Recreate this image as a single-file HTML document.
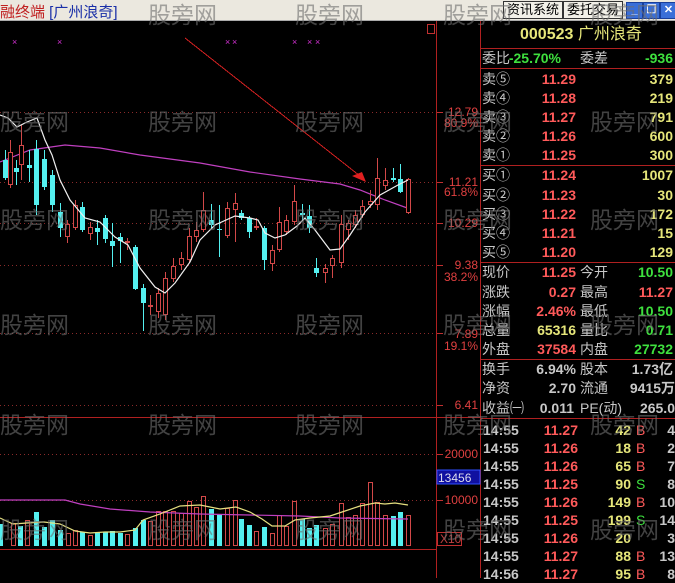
<!DOCTYPE html>
<html><head><meta charset="utf-8">
<style>
html,body{margin:0;padding:0;background:#000;width:675px;height:578px;overflow:hidden;font-family:"Liberation Sans","Noto Sans CJK SC",sans-serif}
#title{position:absolute;left:0;top:0;width:675px;height:20px;background:#ebe8df;border-bottom:1px solid #aaa}
.t{position:absolute;white-space:nowrap}
.btn{position:absolute;top:1px;height:16px;border:1px solid #333;background:#f2f0e8;font-size:13px;line-height:16px;padding:0 3px;color:#000}
.wb{position:absolute;top:2px;width:15px;height:15px;background:#3a6fd8;border:1px solid #1a3f9a;color:#fff;font-size:11px;line-height:15px;text-align:center;font-weight:bold}
.p{position:absolute;font-size:14px;white-space:nowrap;line-height:18px}
.w{color:#c8c8c8}.r{color:#ff5a5a}.y{color:#e6e67a}.g{color:#3ee03e}
.num{font-weight:bold;text-align:right}
.wm{position:absolute;font-size:23px;color:rgba(110,110,110,0.6);white-space:nowrap}
.ax{position:absolute;font-size:12px;color:#e04040;right:197px;text-align:right;line-height:12px}
</style></head><body>
<svg id="sv" width="675" height="578" style="position:absolute;left:0;top:0">
</svg>
<div id="title">
<div class="t" style="left:0;top:1px;font-size:15px;color:#c02020">融终端 <span style="color:#1a2fa8">[广州浪奇]</span></div>
<div class="btn" style="left:503px">资讯系统</div>
<div class="btn" style="left:563px">委托交易</div>
<div class="wb" style="left:626px">_</div>
<div class="wb" style="left:643px">❐</div>
<div class="wb" style="left:660px">✕</div>
</div>
<div id="panel"></div>
<div id="wms"></div>
<script>
var s='';
function L(x1,y1,x2,y2,c,d,w){s+='<line x1="'+x1+'" y1="'+y1+'" x2="'+x2+'" y2="'+y2+'" stroke="'+c+'" stroke-width="'+(w||1)+'"'+(d?' stroke-dasharray="'+d+'"':'')+' shape-rendering="crispEdges"/>';}
function R(x,y,w,h,f,st){s+='<rect x="'+x+'" y="'+y+'" width="'+w+'" height="'+h+'" fill="'+f+'"'+(st?' stroke="'+st+'"':'')+' shape-rendering="crispEdges"/>';}
function P(pts,c){s+='<polyline fill="none" stroke="'+c+'" stroke-width="1.2" points="'+pts.map(function(p){return p.join(',')}).join(' ')+'"/>';}
[112,182,223,265,333,405,454,500].forEach(function(y){L(0,y+.5,436,y+.5,'#8a2a2a','1,3');L(437,y+.5,443,y+.5,'#c03030');});
L(436.5,21,436.5,578,'#b02020');L(480.5,21,480.5,578,'#b02020');
L(0,417.5,480,417.5,'#b02020');L(0,549.5,436,549.5,'#b02020');
R(427.5,24.5,7,9,'none','#c03030');
[15,60,228,235,295,310,318].forEach(function(x){s+='<text x="'+(x-3)+'" y="45" fill="#d030d0" font-size="9" font-family="Liberation Sans">×</text>';});
P([[0,162],[30,150],[65,145],[100,148],[140,155],[200,163],[250,172],[300,179],[340,184],[360,190],[385,200],[410,209]],'#c040c0');
var C=[[5,160,178,150,180,'c'],[10,152,185,140,188,'r'],[16,168,172,160,185,'c'],[21,145,165,125,180,'r'],[29,165,168,150,182,'c'],[36,149,205,140,215,'c'],[44,159,187,150,190,'c'],[52,175,205,170,212,'c'],[60,212,228,203,237,'c'],[67,224,237,220,243,'r'],[75,205,228,200,230,'r'],[82,207,230,202,232,'c'],[90,227,234,222,240,'r'],[97,228,232,220,245,'c'],[105,218,239,215,243,'c'],[112,241,246,223,267,'c'],[120,237,241,233,263,'c'],[127,241,243,238,250,'r'],[135,247,289,245,290,'c'],[143,288,303,284,331,'c'],[150,305,307,295,315,'r'],[158,293,312,288,318,'r'],[165,278,315,272,320,'r'],[173,266,279,258,282,'r'],[181,258,265,252,270,'r'],[189,236,260,228,262,'r'],[196,230,237,222,242,'r'],[203,210,230,192,232,'r'],[211,220,225,204,228,'c'],[219,229,230,205,257,'c'],[227,208,236,202,238,'r'],[235,203,210,193,242,'r'],[241,213,218,210,220,'c'],[249,218,232,216,238,'c'],[256,226,228,218,230,'r'],[264,228,260,226,270,'c'],[272,250,264,245,271,'r'],[279,222,250,207,252,'r'],[286,220,232,215,235,'r'],[294,201,222,185,225,'r'],[302,213,215,204,220,'c'],[309,216,228,205,233,'c'],[316,268,273,258,277,'c'],[325,268,273,264,283,'r'],[332,258,266,255,278,'r'],[341,224,263,215,268,'r'],[348,223,230,220,240,'r'],[355,215,225,210,228,'r'],[362,206,215,200,218,'r'],[370,201,205,190,208,'r'],[377,178,205,158,210,'r'],[385,180,186,168,190,'r'],[393,178,180,168,182,'c'],[400,179,192,164,193,'c'],[408,179,213,178,214,'r']];
C.forEach(function(k){var x=k[0],col=k[5]=='c'?'#54f0f0':'#d24848';L(x+.5,k[3],x+.5,k[4],col);if(k[5]=='c')R(x-2,k[1],5,Math.max(1,k[2]-k[1]),col);else R(x-2+.5,k[1]+.5,4,Math.max(1,k[2]-k[1]-1),'#000',col);});
P([[0,115],[8,118],[17,127],[27,122],[37,118],[45,140],[52,155],[60,180],[70,200],[85,218],[100,222],[115,237],[128,245],[140,268],[155,287],[165,293],[175,283],[190,262],[200,240],[215,225],[235,216],[250,218],[258,220],[265,233],[275,238],[285,235],[297,226],[305,218],[315,230],[330,250],[340,249],[350,235],[365,212],[380,195],[398,185],[408,180]],'#f0f0f0');
L(185,38,360,176,'#d02020');s+='<polygon points="352,176 362,172 366,182" fill="#e02020"/>';
var V=[[0,524,'c'],[13,523,'r'],[20,526,'c'],[27,520,'r'],[36,512,'c'],[44,527,'c'],[52,520,'c'],[60,530,'c'],[68,533,'r'],[75,530,'r'],[82,532,'c'],[90,535,'r'],[97,533,'c'],[105,532,'c'],[112,531,'c'],[120,533,'c'],[127,534,'r'],[135,528,'c'],[143,520,'c'],[150,521,'r'],[158,511,'r'],[165,511,'r'],[173,511,'r'],[181,513,'r'],[189,501,'r'],[196,507,'r'],[203,496,'r'],[211,509,'c'],[219,515,'c'],[227,508,'r'],[235,500,'r'],[241,519,'c'],[249,525,'c'],[256,531,'r'],[264,527,'c'],[272,533,'r'],[279,515,'r'],[286,526,'r'],[294,501,'r'],[302,519,'c'],[309,528,'c'],[316,525,'c'],[325,528,'r'],[332,524,'r'],[341,503,'r'],[348,517,'r'],[355,515,'r'],[362,503,'r'],[370,482,'r'],[377,502,'r'],[385,515,'r'],[393,516,'c'],[400,512,'c'],[408,515,'r']];
V.forEach(function(v){if(v[2]=='c')R(v[0]-2,v[1],5,546-v[1],'#54f0f0');else R(v[0]-2+.5,v[1]+.5,4,545-v[1],'none','#d24848');});
P([[0,500],[65,500],[80,504],[110,509],[150,512],[200,514],[300,516],[340,518],[408,519]],'#c040c0');
P([[0,518],[13,524],[27,523],[44,522],[60,524],[75,531],[90,533],[105,532],[120,532],[135,530],[143,520],[160,514],[180,506],[200,505],[220,509],[236,507],[250,512],[262,519],[272,526],[285,526],[295,520],[310,518],[330,516],[345,511],[360,506],[375,503],[385,504],[395,503],[408,505]],'#e6e080');
[48,68,165,262,359,418].forEach(function(y){L(480,y+.5,675,y+.5,'#b02020');});
R(437,470,43,14,'#1010a0','#3050ff');
R(437.5,532.5,24,13,'none','#c03030');
document.getElementById('sv').innerHTML=s;
var ax=[['12.79',106],['80.9%',117],['11.21',176],['61.8%',186],['10.29',217],['9.38',259],['38.2%',271],['7.89',328],['19.1%',340],['6.41',399],['20000',448],['10000',494]];
var h='';ax.forEach(function(a){h+='<div class="ax" style="top:'+a[1]+'px;right:'+(675-478)+'px">'+a[0]+'</div>';});
h+='<div class="ax" style="top:472px;left:438px;right:auto;color:#dde;font-size:12px">13456</div>';
h+='<div class="ax" style="top:533px;left:440px;right:auto;color:#c04040">X10</div>';
function row(y,a){a.forEach(function(c){h+='<div class="p '+c[2]+(c[3]?' num':'')+'" style="top:'+(y-9)+'px;'+(c[3]?'right:'+(675-c[0])+'px':'left:'+c[0]+'px')+'">'+c[1]+'</div>';});}
h+='<div class="p y" style="left:520px;top:26px;font-size:16px;"><b>000523</b> 广州浪奇</div>';
row(58,[[482,'委比','w'],[561,'-25.70%','g',1],[580,'委差','w'],[673,'-936','g',1]]);
var sl=[['卖⑤','11.29','379',79],['卖④','11.28','219',98],['卖③','11.27','791',117],['卖②','11.26','600',136],['卖①','11.25','300',155],['买①','11.24','1007',175],['买②','11.23','30',195],['买③','11.22','172',214],['买④','11.21','15',233],['买⑤','11.20','129',252]];
sl.forEach(function(r){row(r[3],[[482,r[0],'w'],[576,r[1],'r',1],[673,r[2],'y',1]]);});
var q=[['现价','11.25','r','今开','10.50','g',272],['涨跌','0.27','r','最高','11.27','r',292],['涨幅','2.46%','r','最低','10.50','g',311],['总量','65316','y','量比','0.71','g',330],['外盘','37584','r','内盘','27732','g',349]];
q.forEach(function(r){row(r[6],[[482,r[0],'w'],[576,r[1],r[2],1],[580,r[3],'w'],[673,r[4],r[5],1]]);});
row(369,[[482,'换手','w'],[576,'6.94%','w',1],[580,'股本','w'],[673,'1.73亿','w',1]]);
row(388,[[482,'净资','w'],[576,'2.70','w',1],[580,'流通','w'],[675,'9415万','w',1]]);
row(408,[[482,'收益㈠','w'],[574,'0.011','w',1],[580,'PE(动)','w'],[675,'265.0','w',1]]);
var tk=[['42','B',4],['18','B',2],['65','B',7],['90','S',8],['149','B',10],['199','S',14],['20','',3],['88','B',13],['95','B',8]];
tk.forEach(function(t,i){var y=430+i*18;row(y,[[483,i==8?'14:56':'14:55','w num'],[578,['11.27','11.26','11.26','11.25','11.26','11.25','11.26','11.27','11.27'][i],'r',1],[631,t[0],'y',1],[636,t[1],t[1]=='S'?'g':'r'],[675,t[2],'w',1]]);});
document.getElementById('panel').innerHTML=h;
var w='';[10,117,215,320,420,525].forEach(function(y){[0,148,295,443,590].forEach(function(x){if(y==10&&x==0)return;w+='<div class="wm" style="left:'+x+'px;top:'+(y-14)+'px">股旁网</div>';});});
document.getElementById('wms').innerHTML=w;
</script>
</body></html>
